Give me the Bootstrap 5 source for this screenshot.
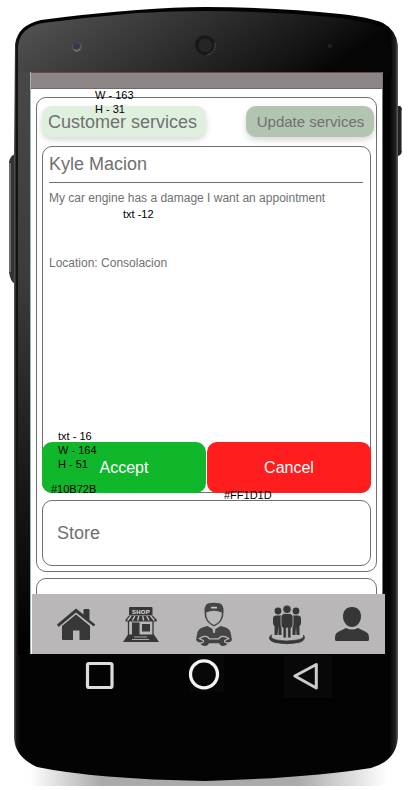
<!DOCTYPE html>
<html lang="en">
<head>
<meta charset="utf-8">
<meta name="viewport" content="width=device-width, initial-scale=1">
<title>Customer services</title>
<link href="https://cdn.jsdelivr.net/npm/bootstrap@5.3.0/dist/css/bootstrap.min.css" rel="stylesheet">
<style>
body{font-family:"Liberation Sans",Arial,sans-serif;color:#707070;background:#fff}
.phone{width:410px;height:790px;padding:72px 25px 0 30px}
.shell{left:0;top:0;z-index:0}
.display{z-index:1;width:355px;height:582px}
.view{width:353px;height:582px;background:#fff;border-left:1px solid #9db4bb;border-right:1px solid #777}
.statusbar{height:17px;background:#8b8685;border-top:1px solid #6a4c4f;border-bottom:1px solid #6f6c6c}
.panel{width:341px;margin-left:5px;border:1px solid #707070;border-radius:10px}
.panel-main{height:475px;margin-top:8px;padding:8px 5px 5px}
.panel-next{height:40px;margin-top:6px}
.pill{height:31px;border:0;border-radius:10px;color:#707070;padding:0;box-shadow:0 3px 6px rgba(0,0,0,.16)}
.pill-customer{width:164px;font-size:18px;line-height:32px;background:#dff0df;padding-right:3px}
.pill-update{width:128px;font-size:15px;line-height:30px;background:#b1c5b1;margin-right:-3px;padding-left:1px}
.request{height:347px;margin-top:9px;border:1px solid #707070;border-radius:10px}
.request-name{font-size:18px;line-height:22px;height:36px;padding-top:6px;margin:0 7px 0 6px;border-bottom:1px solid #707070}
.request-text{font-size:12px;line-height:14px;padding:8px 6px 0}
.request-place{margin-top:51px}
.actions{margin:0 -1px -1px;gap:1px}
.act{height:51px;width:164px;border:0;border-radius:10px;color:#fff;font-size:16px;padding:0}
.act-accept,.act-accept:hover{background:#10b72b;color:#fff}
.act-cancel,.act-cancel:hover{background:#ff1d1d;color:#fff}
.store{height:66px;margin-top:7px;border:1px solid #707070;border-radius:10px;font-size:18px;padding-left:14px}
.tabs{height:60px;width:353px;left:2px;bottom:0;background:#b9b7b7;z-index:2}
.tabs svg{display:block}
.softkeys{z-index:1;width:355px;height:44px}
.note{z-index:3;color:#000;font-size:11px;line-height:14px;white-space:pre}
.n1{left:95px;top:88px}.n2{left:123px;top:207px}.n3{left:58px;top:429px}.n4{left:51px;top:482px}.n5{left:224px;top:488px}
</style>
<script src="https://cdn.jsdelivr.net/npm/bootstrap@5.3.0/dist/js/bootstrap.bundle.min.js"></script>
</head>
<body class="m-0 overflow-hidden">
<main class="phone position-relative overflow-hidden">
  <svg class="shell position-absolute" width="410" height="790" viewBox="0 0 410 790" aria-hidden="true">
    <defs>
      <linearGradient id="top" x1="0" y1="0" x2="1" y2=".25"><stop offset="0" stop-color="#565656"/><stop offset=".45" stop-color="#343434"/><stop offset=".85" stop-color="#141414"/><stop offset="1" stop-color="#050505"/></linearGradient>
      <linearGradient id="side" x1="0" y1="0" x2="0" y2="1"><stop offset="0" stop-color="#484848"/><stop offset=".35" stop-color="#3c3c3c"/><stop offset=".7" stop-color="#191919"/><stop offset="1" stop-color="#000"/></linearGradient>
      <linearGradient id="edge"><stop offset="0" stop-color="#777"/><stop offset=".032" stop-color="#777"/><stop offset=".04" stop-color="#151515"/><stop offset=".05" stop-color="#030303"/><stop offset=".95" stop-color="#030303"/><stop offset=".965" stop-color="#222"/><stop offset=".972" stop-color="#777"/></linearGradient>
      <linearGradient id="floor"><stop offset="0" stop-color="#aaa" stop-opacity="0"/><stop offset=".2" stop-color="#aaa"/><stop offset=".75" stop-color="#aaa"/><stop offset="1" stop-color="#aaa" stop-opacity="0"/></linearGradient>
      <clipPath id="body"><path d="M14 150L15 44Q18 25 41 20Q85 14 137 10Q175 7 205 7Q275 7 340 14Q369 17 383 23Q396 30 398 45V738Q396 761 371 768Q310 778 205 781Q95 779 37 767Q15 757 14 738Z"/></clipPath>
    </defs>
    <path d="M30 764H387V786H30Z" fill="url(#floor)"/>
    <path d="M15 154Q10 156 9 162V272Q10 281 15 284Z" fill="#333"/><path d="M10 163V272" stroke="#aaa"/>
    <path d="M398 106H400Q402 107 402 111V150Q402 155 398 156Z" fill="#222"/><path d="M401.5 110V151" stroke="#888"/>
    <g clip-path="url(#body)">
      <path d="M0 0H410V790H0Z" fill="url(#edge)"/>
      <path d="M18 76V46Q20 27 43 23Q90 17 137 13Q175 11 205 11Q275 11 340 18Q368 22 380 27Q391 33 392 48V76Z" fill="url(#top)"/>
      <path d="M18 72H31V655H18Z" fill="url(#side)"/>
    </g>
    <circle cx="77" cy="47" r="5" fill="#555"/><circle cx="76.500" cy="46" r="3.500" fill="#393946"/><path d="M74.500 50L77.500 51L80 49" stroke="#888294" fill="none"/>
    <circle cx="205" cy="45" r="10" fill="#181818"/><circle cx="205.500" cy="45.500" r="7" fill="#252525"/><path d="M207 55A10 10 0 0 0 215 43" fill="none" stroke="#484848"/>
    <circle cx="330" cy="46" r="2" fill="#222"/>
  </svg>

  <div class="display position-relative overflow-hidden">
    <div class="view overflow-hidden">
      <div class="statusbar"></div>
      <section class="panel panel-main">
        <div class="d-flex justify-content-between">
          <button class="btn pill pill-customer">Customer services</button>
          <button class="btn pill pill-update">Update services</button>
        </div>
        <article class="request d-flex flex-column">
          <div class="request-name">Kyle Macion</div>
          <div class="request-text">
            <div>My car engine has a damage I want an appointment</div>
            <div class="request-place">Location: Consolacion</div>
          </div>
          <div class="actions d-flex mt-auto">
            <button class="btn act act-accept">Accept</button>
            <button class="btn act act-cancel">Cancel</button>
          </div>
        </article>
        <div class="store d-flex align-items-center">Store</div>
      </section>
      <section class="panel panel-next"></section>
    </div>
    <nav class="tabs position-absolute">
      <svg width="353" height="60" viewBox="32 594 353 60" fill="#373737">
        <!-- Home -->
        <path d="M57 624.500L76 608.500L83.500 614.500V610Q83.500 609 84.500 609H88.500Q89.500 609 89.500 610V620L95.300 624.500L93.800 626.500L76 612.500L58.500 627Z"/>
        <path d="M62 626L76 614.500L90 626V639Q90 640 89 640H79.500V630.500H73V640H63Q62 640 62 639Z"/>
        <!-- Shop -->
        <path d="M129 608Q129 607 130 607H151.500Q152.500 607 152.500 608V615H129Z"/>
        <text x="141" y="613.500" text-anchor="middle" font-size="6" font-weight="700" letter-spacing=".3" fill="#e2e0e0">SHOP</text>
        <path d="M129 615.500H152.500L157 620Q157 621.500 155.500 621.500H126.500Q125 621.500 125.300 620Z"/>
        <path d="M131 616L127.500 620.500M134.800 616L132.500 620.500M138.700 616L137.700 620.500M142.700 616L143.700 620.500M146.700 616L149 620.500M150.500 616L154.300 620.500" stroke="#c4c2c2" stroke-width="1.300"/>
        <path d="M128.500 621V635M153 621V635" stroke="#373737" stroke-width="1.300"/>
        <path d="M132 622.500H139.500V634.500H132ZM142 624H150V631.500H142ZM128 634.500H154L159 642H123Z"/>
        <path d="M134 637H147M132 639.500H149" stroke="#aaa8a8" stroke-width="1"/>
        <!-- Mechanic -->
        <g fill="#454545">
          <path fill-rule="evenodd" d="M204.500 612Q204 604.800 208.500 603.300Q214 602 219.500 603.300Q224 604.800 223.500 612Q223.800 622 214 626.500Q204.200 622 204.500 612ZM206.200 612.500Q205.500 621 214 625Q222.500 621 221.800 612.500Q214 608.800 206.200 612.500Z"/>
          <rect x="211" y="606.800" width="6" height="1.800" rx=".5" fill="#c8c6c6"/>
          <path d="M207.500 626L212.500 629L213.200 633H214.800L215.500 629L220.500 626Q229 627.500 230.500 632L232 640Q231 642 228 642.500H200Q197 642 196 640L197.500 632Q199 627.500 207.500 626Z"/>
        </g>
        <path d="M200.500 638.500Q203 636.500 206 637Q208 637.500 209 639.500H219Q220 637.500 222 637Q225 636.500 227.500 638.500L224 640.200V642.300L227.500 644Q225 646.500 222 646Q220 645.500 219 643.300H209Q208 645.500 206 646Q203 646.500 200.500 644L204 642.300V640.200Z" fill="#424242" stroke="#b9b7b7" stroke-width="2.400" paint-order="stroke"/>
        <!-- Team -->
        <g>
          <circle cx="278" cy="611" r="3.400"/><path d="M275.500 615.500H281Q283 616 283 618V624H281.500V635H278.500V626L277.500 635H274.500V626Q273 625 273 623V618Q273 616 275.500 615.500Z"/>
          <circle cx="296" cy="611" r="3.400"/><path d="M293 615.500H298.500Q301 616 301 618V623Q301 625 299.500 626V635H296.500L296 626L295.500 635H292.500V624H291V618Q291 616 293 615.500Z"/>
          <g stroke="#b9b7b7" stroke-width=".8"><circle cx="287" cy="609.300" r="4.200"/><path d="M284 613.500H290Q293 614.200 293 617V625Q293 627 291 628V638H287.600V628H286.400V638H283V628Q281 627 281 625V617Q281 614.200 284 613.500Z"/></g>
          <path d="M270.500 635.500Q267 640 275 642.500Q287 645 299 642.500Q307 640 303.500 635Q305 638.500 297 640Q286 642 276.500 640Q269 638 272 635Z" stroke="#373737" stroke-width=".7"/>
        </g>
        <!-- Profile -->
        <path d="M352 607C358 607 361 611 361 616.500C361 622 357 627 352 627C347 627 343 622 343 616.500C343 611 346 607 352 607ZM346 628Q352 631 358 628L366 632Q369 633.500 369 638V639.500Q369 641 367.500 641H336.500Q335 641 335 639.500V638Q335 633.500 338 632Z"/>
      </svg>
    </nav>
  </div>
  <div class="softkeys position-relative">
    <svg width="355" height="44" viewBox="30 654 355 44" fill="none" class="d-block">
      <path d="M189 655H224V692H189ZM284 655H332V700H284Z" fill="#080808"/>
      <rect x="87.500" y="663.500" width="24.500" height="24" rx="1.500" stroke="#ddd" stroke-width="3.200"/>
      <circle cx="204" cy="674.300" r="13.500" stroke="#f5f5f5" stroke-width="3.300"/>
      <path d="M294.800 676L316.300 664.500V688Z" stroke="#ccc" stroke-width="3" stroke-linejoin="round"/>
    </svg>
  </div>

  <div class="note position-absolute n1">W - 163
H - 31</div>
  <div class="note position-absolute n2">txt -12</div>
  <div class="note position-absolute n3">txt - 16
W - 164
H - 51</div>
  <div class="note position-absolute n4">#10B72B</div>
  <div class="note position-absolute n5">#FF1D1D</div>
</main>
</body>
</html>
